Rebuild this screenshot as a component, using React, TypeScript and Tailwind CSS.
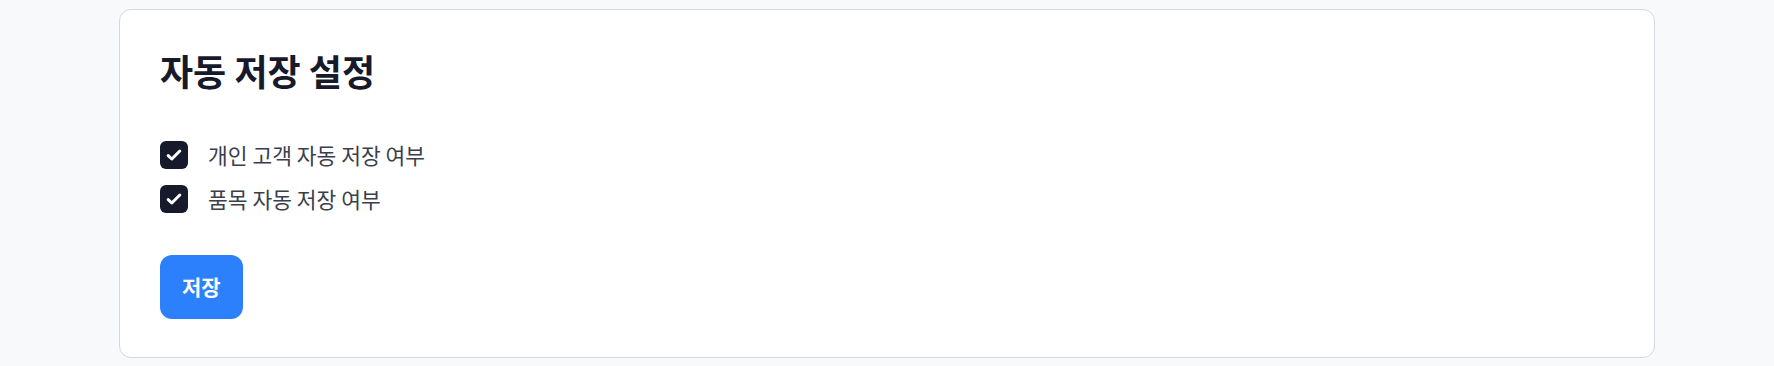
import React, { useState } from "react";

const font = {
  fontFamily: '"Noto Sans CJK KR", "Noto Sans", sans-serif',
};

const CheckRow = ({
  label,
  checked,
  onToggle,
}: {
  label: string;
  checked: boolean;
  onToggle: () => void;
}) => {
  return (
    <label className="flex items-center gap-5 cursor-pointer select-none">
      <span
        onClick={onToggle}
        className={`w-7 h-7 rounded-md flex items-center justify-center ${
          checked ? "bg-[#171a2b]" : "bg-white border border-gray-300"
        }`}
      >
        {checked && (
          <svg width="18" height="18" viewBox="0 0 18 18" fill="none">
            <path
              d="M3.2 9.6l3.6 3.4L14.8 5"
              stroke="white"
              strokeWidth="3"
              strokeLinecap="round"
              strokeLinejoin="round"
            />
          </svg>
        )}
      </span>
      <span className="text-[21.5px] leading-7 text-[#3a3f4b]">{label}</span>
    </label>
  );
};

const App = () => {
  const [personal, setPersonal] = useState<boolean>(true);
  const [product, setProduct] = useState<boolean>(true);

  return (
    <div className="min-h-screen w-full bg-[#f8f9fb] pt-[9px]" style={font}>
      <div className="max-w-[1536px] mx-auto bg-white border border-[#d4d7dd] rounded-xl px-10 pt-10 pb-[38px]">
        <h2 className="text-4xl leading-[40px] font-bold text-[#171a2b] mb-[51px]">
          자동 저장 설정
        </h2>
        <div className="flex flex-col gap-4">
          <CheckRow
            label="개인 고객 자동 저장 여부"
            checked={personal}
            onToggle={() => setPersonal(!personal)}
          />
          <CheckRow
            label="품목 자동 저장 여부"
            checked={product}
            onToggle={() => setProduct(!product)}
          />
        </div>
        <button className="mt-[42px] bg-[#2d80fb] text-white text-[21px] font-semibold px-[22px] h-16 rounded-xl">
          저장
        </button>
      </div>
    </div>
  );
};

export default App;
